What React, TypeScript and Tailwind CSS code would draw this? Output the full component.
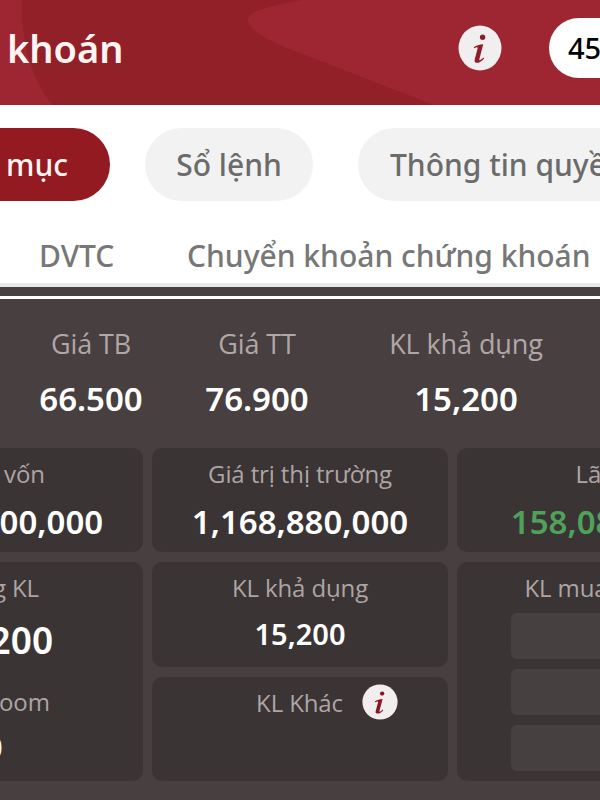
import React from 'react';
import clsx from 'clsx';

function InfoIcon({ className, glyph }: { className?: string; glyph: string }) {
  return (
    <svg viewBox="0 0 44 46" preserveAspectRatio="none" className={clsx('shrink-0', className)}>
      <ellipse cx="22" cy="23" rx="22" ry="23" fill={glyph} opacity="0.35" />
      <ellipse cx="22" cy="23" rx="21.5" ry="22.5" fill="#f0eeee" />
      <circle cx="24.6" cy="12.2" r="2.7" fill={glyph} />
      <path
        d="M15.8 22.2C18.2 20.4 21.4 19.5 25.2 19.2L21.3 34.4C21 35.9 22.3 35.8 25.4 32.6L26.1 33.4C23.4 36.6 21 37.9 18.6 37.8C16.5 37.7 16.3 36 16.9 33.8L19.6 23.5C20 21.8 18.4 22 16.3 23.2Z"
        fill={glyph}
      />
    </svg>
  );
}

function Header() {
  return (
    <header className="relative flex h-[105px] w-[600px] items-center overflow-hidden bg-[#9e2632]">
      <svg viewBox="0 0 600 105" className="absolute inset-0 h-full w-full">
        <path d="M22 0C21 40 30 76 52 105H434L300 53C270 42 248 30 248 20C248 11 272 5 302 0Z" fill="#912028" />
      </svg>
      <h1 className="relative ml-[7px] -mt-[8px] w-[451px] shrink-0 text-[38px] font-semibold text-[#fff4f2]">khoán</h1>
      <InfoIcon className="relative -mt-[9px] h-[46px] w-[44px]" glyph="#8f1c28" />
      <div className="relative -mt-[9px] ml-[47px] flex h-[60px] w-[140px] shrink-0 items-center rounded-full bg-white pl-[19px] text-[29px] font-medium text-black">
        45
      </div>
    </header>
  );
}

function Chips() {
  const base = 'flex h-[73px] shrink-0 items-center rounded-full text-[30px] font-medium';
  return (
    <nav className="mt-[23px] flex">
      <div className={clsx(base, '-ml-[90px] w-[200px] justify-end bg-[#921a20] pr-[42px] text-[#fff4f2]')}>mục</div>
      <div className={clsx(base, 'ml-[35px] w-[168px] justify-center bg-[#f2f2f2] text-[#6b6b6b]')}>Sổ lệnh</div>
      <div className={clsx(base, 'ml-[45px] w-[310px] bg-[#f2f2f2] pl-[32px] text-[#6b6b6b]')}>Thông tin quyền</div>
    </nav>
  );
}

function SummaryColumn({ label, value, className }: { label: string; value: string; className: string }) {
  return (
    <div className={clsx('flex shrink-0 flex-col items-center', className)}>
      <span className="font-['Open_Sans'] text-[27px] leading-[40px] tracking-[-0.1px] text-[#b1a7a7]">{label}</span>
      <span className="mt-[14px] text-[33px] leading-[42px] font-semibold text-white">{value}</span>
    </div>
  );
}

function Card({ className, children }: { className?: string; children: React.ReactNode }) {
  return (
    <div className={clsx('flex flex-col items-center rounded-[10px] bg-[#3b3434] pt-[9px]', className)}>
      {children}
    </div>
  );
}

function CardLabel({ children }: { children: React.ReactNode }) {
  return (
    <span className="font-['Open_Sans'] text-[24px] leading-[34px] tracking-[-0.12px] text-[#ada5a5]">{children}</span>
  );
}

function Holdings() {
  return (
    <section className="ml-[-153px] grid grid-cols-[296px_296px_296px] grid-rows-[104px_105px_104px] gap-x-[9px] gap-y-[10px]">
      <Card>
        <span className="-ml-[2px]">
          <CardLabel>Tổng vốn</CardLabel>
        </span>
        <span className="mt-[10px] text-[33px] leading-[42px] font-semibold text-white">1,010,800,000</span>
      </Card>
      <Card>
        <CardLabel>Giá trị thị trường</CardLabel>
        <span className="mt-[10px] text-[33px] leading-[42px] font-semibold text-white">1,168,880,000</span>
      </Card>
      <Card>
        <span className="pl-[8px]">
          <CardLabel>Lãi/Lỗ</CardLabel>
        </span>
        <span className="mt-[10px] text-[33px] leading-[42px] font-semibold text-[#4fa25c]">158,080,000</span>
      </Card>

      <Card className="row-span-2">
        <CardLabel>Tổng KL</CardLabel>
        <span className="mt-[12px] text-[37px] leading-[46px] font-semibold text-white">15,200</span>
        <span className="mt-[22px] pl-[11px]">
          <CardLabel>KL Room</CardLabel>
        </span>
        <span className="mt-[8px] -ml-[1px] text-[28px] leading-[40px] font-semibold text-white">0</span>
      </Card>
      <Card>
        <CardLabel>KL khả dụng</CardLabel>
        <span className="mt-[9px] text-[29px] leading-[40px] font-semibold text-white">15,200</span>
      </Card>
      <Card className="row-span-2">
        <CardLabel>KL mua chờ về</CardLabel>
        <div className="mt-[8px] flex w-[188px] flex-col gap-[10px]">
          <div className="h-[46px] rounded-[6px] bg-[#464040]" />
          <div className="h-[46px] rounded-[6px] bg-[#464040]" />
          <div className="h-[46px] rounded-[6px] bg-[#464040]" />
        </div>
      </Card>
      <Card>
        <div className="flex h-[34px] items-center gap-[19px] pl-[54px]">
          <CardLabel>KL Khác</CardLabel>
          <InfoIcon className="-mt-[2px] h-[36px] w-[36px]" glyph="#8f1525" />
        </div>
      </Card>
    </section>
  );
}

export default function App() {
  return (
    <div className="h-[800px] w-[600px] overflow-hidden bg-[#483f40] font-['Noto_Sans','Open_Sans',sans-serif] whitespace-nowrap">
      <div className="h-[283px] bg-white">
        <Header />
        <Chips />
        <div className="mt-[34px] flex pl-[39px] text-[30px] leading-[42px] font-medium text-[#777]">
          <span className="w-[148px] shrink-0">DVTC</span>
          <span>Chuyển khoản chứng khoán</span>
        </div>
      </div>
      <div className="h-[4px] bg-[#e9e9e9]" />
      <div className="mt-[9px] h-[3px] bg-white" />
      <div className="flex h-[149px] pt-[25px]">
        <SummaryColumn label="Giá TB" value="66.500" className="ml-[8px] w-[166px]" />
        <SummaryColumn label="Giá TT" value="76.900" className="w-[166px]" />
        <SummaryColumn label="KL khả dụng" value="15,200" className="ml-[26px] w-[200px]" />
      </div>
      <Holdings />
    </div>
  );
}
